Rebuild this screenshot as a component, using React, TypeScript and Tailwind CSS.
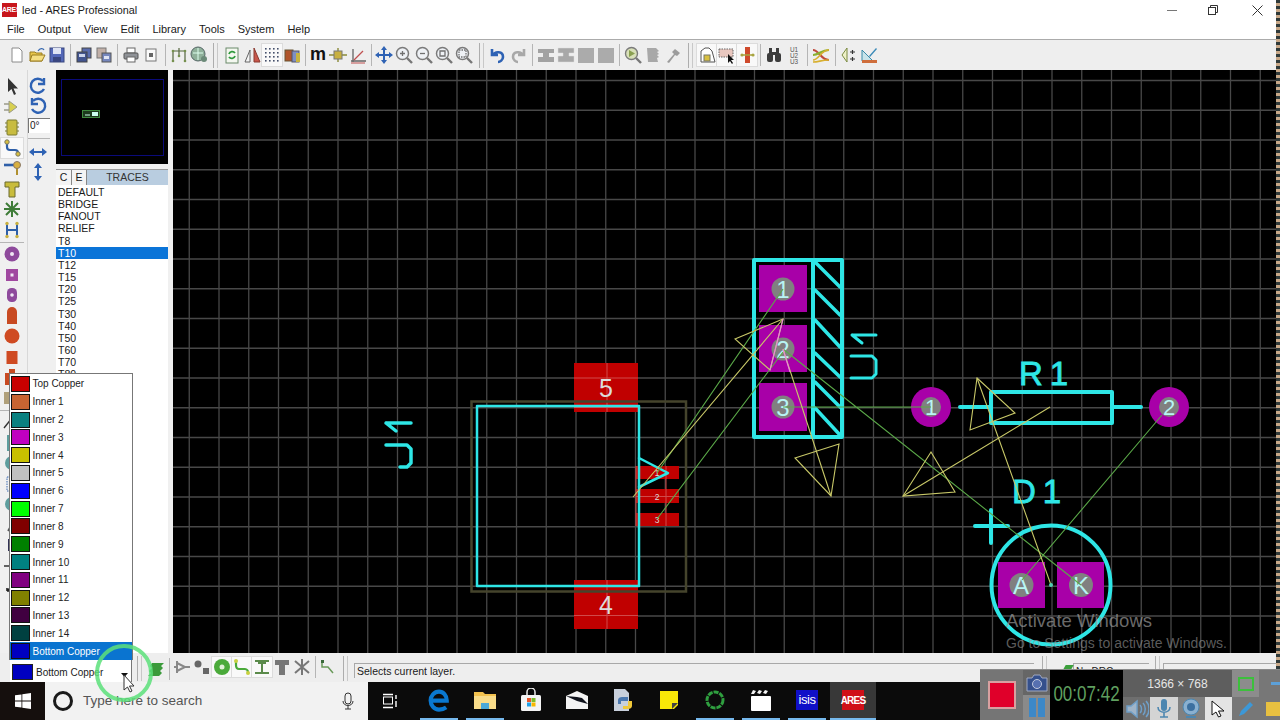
import type { ReactNode } from "react";

const Ico = ({ children, size = 20 }: { children: ReactNode; size?: number }) => (
  <svg width={size} height={size} viewBox="0 0 20 20" className="block shrink-0">
    {children}
  </svg>
);

const icons: Record<string, ReactNode> = {
  new: <path d="M5 3h7l3 3v11H5z" fill="#fff" stroke="#8a8a8a" />,
  open: (
    <>
      <path d="M3 7h5l1 1h6v8H3z" fill="#e8c64a" stroke="#9a7d20" />
      <path d="M5 10h13l-3 6H3z" fill="#f5de82" stroke="#9a7d20" />
      <path d="M11 6c2-3 5-3 6-1" fill="none" stroke="#3a6ab0" strokeWidth="1.3" />
    </>
  ),
  save: (
    <>
      <rect x="3" y="3" width="14" height="14" fill="#5468b8" stroke="#39467f" />
      <rect x="6" y="3" width="8" height="6" fill="#dfe4f4" />
      <rect x="6" y="12" width="8" height="5" fill="#39467f" />
    </>
  ),
  copy1: (
    <>
      <rect x="8" y="3" width="9" height="10" fill="#5a6cae" stroke="#444" />
      <rect x="3" y="7" width="10" height="10" fill="#42548f" stroke="#444" />
      <rect x="5" y="9" width="6" height="3" fill="#cbd3ea" />
    </>
  ),
  copy2: (
    <>
      <rect x="3" y="3" width="9" height="10" fill="#c2b0a8" stroke="#777" />
      <rect x="8" y="8" width="9" height="9" fill="#7687bd" stroke="#555" />
      <path d="M10 11h5v3h-5z" fill="#dfe4f4" />
    </>
  ),
  print: (
    <>
      <rect x="6" y="3" width="8" height="5" fill="#fff" stroke="#666" />
      <rect x="3" y="8" width="14" height="6" rx="1" fill="#8f9297" stroke="#555" />
      <rect x="6" y="12" width="8" height="5" fill="#fff" stroke="#666" />
    </>
  ),
  preview: (
    <>
      <rect x="5" y="4" width="10" height="12" fill="#fafafa" stroke="#777" />
      <rect x="8" y="8" width="4" height="4" fill="#666" />
    </>
  ),
  nets: (
    <>
      <path d="M4 16V6h12v10M10 3v8" fill="none" stroke="#55663f" strokeWidth="1.2" />
      <g fill="#76904e">
        <circle cx="4" cy="6" r="1.3" />
        <circle cx="16" cy="6" r="1.3" />
        <circle cx="10" cy="11" r="1.3" />
        <circle cx="4" cy="16" r="1.3" />
        <circle cx="16" cy="16" r="1.3" />
      </g>
    </>
  ),
  chk: (
    <>
      <circle cx="9" cy="9" r="7" fill="#8fb09a" stroke="#566" />
      <path d="M4 8h10M9 3v12" stroke="#dfe" />
      <circle cx="15" cy="14" r="3" fill="#6b8a78" />
    </>
  ),
  refresh: (
    <>
      <rect x="4" y="3" width="12" height="15" fill="#f4f8f0" stroke="#6b8a6b" />
      <path d="M7 9a3.4 3.4 0 0 1 6-1M13 11a3.4 3.4 0 0 1-6 1" fill="none" stroke="#2f9a3c" strokeWidth="1.8" />
    </>
  ),
  mirror: (
    <>
      <path d="M8 5v12H3z" fill="#f4f4f4" stroke="#666" />
      <path d="M12 3v14h6z" fill="#c8564a" stroke="#8a3a30" />
    </>
  ),
  grid: (
    <g fill="#45506b">
      {[4, 8, 12, 16].flatMap((x) =>
        [4, 8, 12, 16].map((y) => <rect key={`${x}-${y}`} x={x - 1} y={y - 1} width="1.6" height="1.6" />)
      )}
    </g>
  ),
  layers: (
    <>
      <rect x="3" y="5" width="8" height="11" fill="#b0542a" stroke="#653" />
      <rect x="10" y="6" width="7" height="11" fill="#7f8ec2" stroke="#556" />
      <rect x="14" y="8" width="4" height="9" fill="#c8b440" />
    </>
  ),
  m: (
    <text x="10" y="15" textAnchor="middle" fontSize="18" fontWeight="700" fontFamily="Liberation Sans" fill="#111">
      m
    </text>
  ),
  origin: (
    <>
      <path d="M1 10h18M10 3v14" stroke="#8a8a3a" strokeWidth="1.4" />
      <rect x="6" y="6" width="8" height="8" fill="#c8b040" stroke="#777" />
    </>
  ),
  axis: (
    <>
      <path d="M3 16h15M5 17V4" stroke="#666" strokeWidth="1.3" />
      <path d="M6 15L15 6" stroke="#c05050" strokeWidth="1.2" />
      <path d="M3 18h14" stroke="#c05050" />
    </>
  ),
  move: <path d="M10 1l3 4h-2v4h4V7l4 3-4 3v-2h-4v4h2l-3 4-3-4h2v-4H5v2l-4-3 4-3v2h4V5H7z" fill="#2e62b4" />,
  zin: <Zoom mark="M6 8.5h5M8.5 6v5" />,
  zout: <Zoom mark="M6 8.5h5" />,
  zall: <Zoom mark="M6 6h5v5H6z" />,
  zarea: <Zoom mark="M5 5h7v7H5z" dashed />,
  undo: <path d="M4 4v6h6M5 10c2-4 10-4 10 2 0 3-3 5-5 5" fill="none" stroke="#2e62b4" strokeWidth="2.6" />,
  redo: <path d="M16 4v6h-6M15 10c-2-4-10-4-10 2 0 3 3 5 5 5" fill="none" stroke="#a8a8a8" strokeWidth="2.6" />,
  a1: <path d="M2 4h16v4h-5v4h5v5H2v-5h5V8H2z" fill="#a2a2a2" />,
  a2: <path d="M2 3h16v5h-5v3h5v6H2v-6h5V8H2z" fill="#a8a8a8" stroke="#ddd" strokeWidth=".5" />,
  a3: <rect x="2" y="3" width="16" height="15" fill="#ababab" />,
  zcomp: (
    <>
      <circle cx="8.5" cy="8.5" r="6" fill="#d8e0b8" stroke="#7b7b7b" strokeWidth="1.4" />
      <path d="M6 5v7l6-3.5z" fill="#8aa050" />
      <path d="M13 13l5 5" stroke="#777" strokeWidth="2.4" />
    </>
  ),
  stack: <path d="M4 3h9l3 3-2 1 2 2-2 1 2 2-2 1 1 4H5z" fill="#a8a8a8" />,
  hammer: <path d="M4 17l7-8-2-2 3-3 5 4-3 3-2-1-6 8z" fill="#9c9c9c" />,
  lock: (
    <>
      <path d="M4 17V6l4-3h4l3 3 3 11z" fill="#fff" stroke="#555" />
      <rect x="7" y="10" width="6" height="6" fill="#d8c040" stroke="#776" />
    </>
  ),
  sel: (
    <>
      <rect x="2" y="4" width="14" height="8" fill="#e9c8c0" stroke="#666" strokeDasharray="1.5 1" />
      <path d="M11 9v9l2-2 2 3 1-1-2-3h3z" fill="#111" />
    </>
  ),
  dim: (
    <>
      <rect x="8" y="2" width="5" height="16" fill="#cf4a2c" />
      <path d="M5 10h11" stroke="#a8a440" strokeWidth="1.5" />
      <circle cx="5" cy="10" r="1.6" fill="#a8a440" />
      <circle cx="16" cy="10" r="1.6" fill="#a8a440" />
    </>
  ),
  find: (
    <g fill="#3c3c3c">
      <rect x="3" y="8" width="6" height="9" rx="2" />
      <rect x="11" y="8" width="6" height="9" rx="2" />
      <rect x="5" y="3" width="3" height="6" />
      <rect x="12" y="3" width="3" height="6" />
      <rect x="8" y="7" width="4" height="3" />
    </g>
  ),
  u123: (
    <g fontFamily="Liberation Sans" fontSize="6.4" fill="#555" textAnchor="middle">
      <text x="10" y="6.5">U1</text>
      <text x="10" y="12.5">U2</text>
      <text x="10" y="18.5">U3</text>
    </g>
  ),
  swap: (
    <>
      <path d="M2 5c6 0 8 10 16 10" fill="none" stroke="#c04a3c" strokeWidth="2.2" />
      <path d="M2 10c6 0 8-5 16-5" fill="none" stroke="#8ab030" strokeWidth="2.2" />
      <path d="M2 15c6 0 8-10 16-10M2 17c6 0 8-2 16-2" fill="none" stroke="#d8b030" strokeWidth="1.6" />
    </>
  ),
  flip: (
    <>
      <path d="M8 3l-5 7 5 7z" fill="#eef0c8" stroke="#7a8a40" />
      <path d="M11 7h5M13.5 5v4M11 14h5M13.5 12v4" stroke="#333" strokeWidth="1.2" />
    </>
  ),
  ruler: (
    <>
      <path d="M3 16V5l11 11z" fill="#c8e4ea" stroke="#3a8aa8" />
      <rect x="3" y="15" width="15" height="3" fill="#cf6e3c" />
      <path d="M10 11l7-8 1 1-7 8z" fill="#3a8ab8" />
    </>
  ),
};

function Zoom({ mark, dashed }: { mark: string; dashed?: boolean }) {
  return (
    <>
      <circle cx="8.5" cy="8.5" r="6" fill="#eef1f5" stroke="#7b7b7b" strokeWidth="1.5" />
      <path d={mark} fill="none" stroke="#707070" strokeWidth="1.3" strokeDasharray={dashed ? "1.5 1" : undefined} />
      <path d="M13 13l5 5" stroke="#777" strokeWidth="2.4" />
    </>
  );
}

const Tool = ({ name, active }: { name: string; active?: boolean }) => (
  <div className={`w-5 h-[22px] flex items-center justify-center shrink-0 ${active ? "bg-[#f9f9f9] outline outline-[#dcdcdc]" : ""}`}>
    <Ico>{icons[name]}</Ico>
  </div>
);

const Sep = ({ w = "w-[5px]" }: { w?: string }) => (
  <div className={`${w} h-[22px] flex justify-center shrink-0`}>
    <div className="w-px h-full bg-[#b5b5b5]" />
  </div>
);

const Grip = ({ w = "w-[9px]" }: { w?: string }) => (
  <div className={`${w} h-[25px] flex justify-center gap-[3px] shrink-0`}>
    <div className="w-px h-full bg-[#adadad]" />
    <div className="w-px h-full bg-[#c8c8c8]" />
  </div>
);

const Group = ({ items }: { items: string[] }) => (
  <>
    {items.map((n) => (
      <Tool key={n} name={n} active={n === "grid" || n === "lock" || n === "sel" || n === "dim"} />
    ))}
  </>
);

const menus = ["File", "Output", "View", "Edit", "Library", "Tools", "System", "Help"];

const sideA: ReactNode[] = [
  <path d="M6 2v14l3.5-3 2.5 6 2-1-2.5-5.500H16z" fill="#333" />,
  <>
    <path d="M7 4v12l8-6z" fill="#d8d050" stroke="#998" />
    <path d="M2 7h5M2 13h5" stroke="#998" strokeWidth="1.4" />
  </>,
  <>
    <rect x="5" y="3" width="10" height="15" rx="1" fill="#c8bc40" stroke="#7a7a30" />
    <path d="M3 6h2M3 10h2M3 14h2M15 6h2M15 10h2M15 14h2" stroke="#7a7a30" />
  </>,
  <>
    <path d="M5 5v4c0 2 1 3 3 3h5c2 0 3 1 3 3" fill="none" stroke="#2e5fa8" strokeWidth="2.2" />
    <circle cx="5" cy="4" r="2.200" fill="#d8c040" stroke="#776" />
    <circle cx="16" cy="16" r="2.200" fill="#d8c040" stroke="#776" />
  </>,
  <>
    <path d="M2 7h12" stroke="#2e5fa8" strokeWidth="2.600" />
    <path d="M15 9v8" stroke="#b09030" strokeWidth="2" />
    <circle cx="15" cy="7" r="3.500" fill="#d8b040" stroke="#876" />
  </>,
  <path d="M3 3h14v5h-4v10H7V8H3z" fill="#c8bc3c" stroke="#6a6a30" />,
  <path d="M10 2v16M2 10h16M4 4l12 12M16 4L4 16" stroke="#3e7c38" strokeWidth="2" />,
  <>
    <path d="M5 3v14M15 3v14M5 10h10" stroke="#2e5fa8" strokeWidth="2" />
    <g fill="#c8b040">
      <circle cx="5" cy="3.500" r="1.700" />
      <circle cx="15" cy="3.500" r="1.700" />
      <circle cx="5" cy="16.500" r="1.700" />
      <circle cx="15" cy="16.500" r="1.700" />
    </g>
  </>,
  null,
  <>
    <circle cx="10" cy="10" r="7.500" fill="#8e4a9c" />
    <circle cx="10" cy="10" r="2" fill="#f0e8f4" />
  </>,
  <>
    <rect x="4" y="4" width="12" height="12" fill="#a048a0" />
    <rect x="8.500" y="8.500" width="3" height="3" fill="#f0e8f4" />
  </>,
  <>
    <rect x="5" y="3" width="10" height="14" rx="4.500" fill="#8e4a9c" />
    <circle cx="10" cy="10" r="1.800" fill="#f0e8f4" />
  </>,
  <path d="M5 18V6a5 5 0 0 1 10 0v12z" fill="#c84a22" />,
  <circle cx="10" cy="10" r="7.500" fill="#cf4a22" />,
  <rect x="4.500" y="4" width="11" height="13" fill="#cf4a22" />,
  <path d="M3 6h4V2h6v4h-1v12H3z" fill="#c84a22" />,
  <path d="M2 4h8v12H2z" fill="#b0a07a" />,
  null,
  <path d="M2 16L10 6" stroke="#333" strokeWidth="1.400" />,
  <rect x="5" y="2" width="10" height="16" fill="#5e9e9e" />,
  <circle cx="10" cy="10" r="7" fill="#5e9e9e" />,
  <rect x="5" y="3" width="10" height="14" fill="none" stroke="#3a6ab0" strokeDasharray="1.500 1" />,
  <circle cx="10" cy="10" r="7" fill="#5e9e9e" />,
  <path d="M6 16l6-11" stroke="#555" strokeWidth="1.600" />,
  <rect x="6" y="4" width="8" height="12" fill="#335" />,
  <path d="M2 10h12" stroke="#333" strokeWidth="1.500" />,
  <path d="M5 15L12 8M5 15h3M5 15v-3" stroke="#222" strokeWidth="1.600" />,
];

const traces = ["DEFAULT", "BRIDGE", "FANOUT", "RELIEF", "T8", "T10", "T12", "T15", "T20", "T25", "T30", "T40", "T50", "T60", "T70", "T80"];

const layerRows = [
  ["Top Copper", "bg-[#c80000]"],
  ["Inner 1", "bg-[#c86432]"],
  ["Inner 2", "bg-[#0a8080]"],
  ["Inner 3", "bg-[#c000c0]"],
  ["Inner 4", "bg-[#c8c000]"],
  ["Inner 5", "bg-[#c0c0c0]"],
  ["Inner 6", "bg-[#0000ff]"],
  ["Inner 7", "bg-[#00ff00]"],
  ["Inner 8", "bg-[#800000]"],
  ["Inner 9", "bg-[#008000]"],
  ["Inner 10", "bg-[#008080]"],
  ["Inner 11", "bg-[#800080]"],
  ["Inner 12", "bg-[#808000]"],
  ["Inner 13", "bg-[#400040]"],
  ["Inner 14", "bg-[#004040]"],
  ["Bottom Copper", "bg-[#0000c0]"],
];

const CY = "#2ee6e6";
const GR = "#5aa848";
const YL = "#c8c868";
const vLines = Array.from({ length: 37 }, (_, i) => 189.25 + i * 29.75);
const hLines = Array.from({ length: 19 }, (_, i) => 80.5 + i * 29.75);

function Board() {
  const pin = "#b8f4f4";
  return (
    <svg viewBox="173 70 1103 583" className="block w-full h-full bg-black">
      <g stroke="#484848" strokeWidth="1.300">
        {vLines.map((x) => <path key={x} d={`M${x} 70V653`} />)}
        {hLines.map((y) => <path key={y} d={`M173 ${y}H1276`} />)}
      </g>
      <g fill="#c00000">
        <rect x="574" y="363" width="64" height="49" />
        <rect x="574" y="580" width="64" height="49" />
        <rect x="636" y="466" width="43" height="13" />
        <rect x="636" y="489" width="43" height="14" />
        <rect x="636" y="513" width="43" height="13" />
      </g>
      <path d="M574 378H638M574 407.500H638M574 585.500H638M574 615.500H638M607 363V412M607 580V629M636 466V526M666 466V526M636 496.500H679" stroke="#d04a4a" strokeWidth="1" />
      <rect x="471.500" y="401.500" width="214.500" height="190" fill="none" stroke="#45442c" strokeWidth="2.500" />
      <g fill="#dcdcdc" fontFamily="Liberation Sans" textAnchor="middle">
        <text x="606" y="397" fontSize="25">5</text>
        <text x="606" y="614" fontSize="25">4</text>
        <text x="657" y="476" fontSize="8.500">1</text>
        <text x="657" y="500" fontSize="8.500">2</text>
        <text x="657" y="523" fontSize="8.500">3</text>
      </g>
      <g fill="none" stroke={CY} strokeLinecap="round" strokeLinejoin="round">
        <rect x="477" y="406" width="162" height="180" strokeWidth="2.500" />
        <path d="M639 458L668 473L639 487" strokeWidth="2.500" />
        <path d="M386 423H411M386 423L396 431M386 445H407L411 449V463L407 467H400" strokeWidth="3.500" />
      </g>

      <g fill="#a800a8">
        <rect x="759" y="265" width="48" height="47" />
        <rect x="759" y="325" width="48" height="47" />
        <rect x="759" y="383" width="48" height="48" />
        <circle cx="931" cy="407" r="20" />
        <circle cx="1169" cy="407" r="20" />
        <rect x="998" y="562" width="47" height="46" />
        <rect x="1057" y="562" width="47" height="46" />
      </g>
      <g fill="#808080">
        <circle cx="783" cy="289" r="11.500" />
        <circle cx="783" cy="349" r="11.500" />
        <circle cx="783" cy="407" r="11.500" />
        <circle cx="931" cy="407" r="10" />
        <circle cx="1169" cy="407" r="10" />
        <circle cx="1021.500" cy="585" r="12" />
        <circle cx="1081" cy="585" r="12" />
      </g>

      <g fill="none" stroke={CY} strokeLinecap="round" strokeLinejoin="round">
        <rect x="754" y="260" width="88" height="177" strokeWidth="4" />
        <path d="M813 260V437" strokeWidth="4" />
        <path d="M815 262L840 287M815 290L840 315M815 320L840 347M815 353L840 377M815 382L840 407M815 408L840 435" strokeWidth="3.500" />
        <path d="M852 335H876M852 335L862 343M851 356H872L876 360V374L872 378H851" strokeWidth="3" />
        <rect x="991" y="392" width="121" height="31" strokeWidth="4" />
        <path d="M960 407H990M1112 407H1141" strokeWidth="4" />
        <path d="M975 526H1008M991 510V543" strokeWidth="4" />
        <circle cx="1051" cy="585" r="59.500" strokeWidth="4" />
      </g>
      <g fill={CY} stroke={CY} strokeWidth=".8" fontFamily="Liberation Sans" fontSize="33">
        <text x="1019" y="385" letterSpacing="7">R1</text>
        <text x="1012" y="503" letterSpacing="7">D1</text>
      </g>
      <g fill={pin} fontFamily="Liberation Sans" fontSize="24" textAnchor="middle">
        <text x="783" y="298">1</text>
        <text x="783" y="358">2</text>
        <text x="783" y="416">3</text>
        <text x="931" y="415" fontSize="22">1</text>
        <text x="1169" y="415" fontSize="22">2</text>
        <text x="1021" y="594">A</text>
        <text x="1081" y="594">K</text>
      </g>

      <g fill="none" strokeWidth="1.100">
        <g stroke={GR}>
          <path d="M1162 415L1022 580M783 349L1081 585M783 407H931M783 289L657 473M783 352L657 519" />
        </g>
        <g stroke={YL}>
          <path d="M735 339L783 319L770 370Z" />
          <path d="M795 458L839 444L831 496Z" />
          <path d="M931 452L955 492L903 496Z" />
          <path d="M977 378L1015 413L970 430Z" />
          <path d="M783 319L633 497M783 349L831 496M903 496L1050 407M977 378L1051 585" />
        </g>
        <path d="M783 319L770 370M783 349L790 372" stroke="#e888d8" />
      </g>
      <circle cx="1051" cy="585" r="2" fill="#4fd0b0" />
    </svg>
  );
}

const TaskItem = ({ children, on, dark }: { children: ReactNode; on?: boolean; dark?: boolean }) => (
  <div className={`w-[46px] h-full flex flex-col items-center justify-between shrink-0 ${dark ? "bg-[#383838]" : ""}`}>
    <div className="flex-1 flex items-center justify-center">{children}</div>
    <div className={`h-[2px] ${dark ? "w-full" : "w-[38px]"} ${on ? "bg-[#76b9ed]" : ""}`} />
  </div>
);

function Taskbar() {
  return (
    <div className="h-[38px] flex bg-[#0b0b0b] shrink-0">
      <div className="w-[45px] flex items-center justify-center bg-[#150f0d]">
        <svg width="16" height="16" viewBox="0 0 16 16">
          <path d="M0 2.300l6.500-.9v6.200H0zM7.300 1.300L16 0v7.600H7.300zM0 8.400h6.500v6.200L0 13.700zM7.300 8.400H16V16l-8.700-1.200z" fill="#fff" />
        </svg>
      </div>
      <div className="w-[323px] flex items-center bg-[#f2f2f2]">
        <div className="w-[20px] h-[20px] ml-2 rounded-full border-[3px] border-[#1a1a1a]" />
        <span className="ml-[10px] text-[13.500px] text-[#555]">Type here to search</span>
        <svg width="14" height="18" viewBox="0 0 14 18" className="ml-auto mr-[13px]">
          <rect x="4" y="1" width="6" height="11" rx="3" fill="none" stroke="#333" />
          <path d="M2 9c0 6 10 6 10 0M7 14v3M4 17h6" fill="none" stroke="#333" />
        </svg>
      </div>
      <div className="w-[44px] flex items-center justify-center text-white shrink-0">
        <svg width="16" height="16" viewBox="0 0 16 16" fill="none" stroke="#fff">
          <rect x="1.500" y="4" width="9" height="7" />
          <path d="M1 1.500h10M1 14.500h10M14 2v4M14 8v6" strokeWidth="1.400" />
        </svg>
      </div>
      <div className="h-full flex ml-[4px]">
        <TaskItem on>
          <svg width="24" height="24" viewBox="0 0 20 20">
            <path d="M3.500 10.500H16.500C16.500 6 13.500 3 10 3 6 3 3 6.500 3 10.500S6 18 10 18c2.200 0 4.200-.5 6-1.800" fill="none" stroke="#0a78d0" strokeWidth="3.400" />
          </svg>
        </TaskItem>
        <TaskItem on>
          <svg width="24" height="22" viewBox="0 0 24 22">
            <path d="M1 3h9l2 2h11v15H1z" fill="#f2c14e" />
            <rect x="1" y="7" width="22" height="13" fill="#f8dc8a" />
            <rect x="8" y="14" width="8" height="6" fill="#4aa8d8" />
          </svg>
        </TaskItem>
        <TaskItem>
          <svg width="22" height="24" viewBox="0 0 22 24">
            <path d="M7 7V4a4 4 0 0 1 8 0v3" fill="none" stroke="#eee" strokeWidth="1.500" />
            <rect x="1" y="7" width="20" height="16" rx="1.500" fill="#f4f4f4" />
            <rect x="7" y="10" width="4" height="4" fill="#e8542a" />
            <rect x="11.500" y="10" width="4" height="4" fill="#7cbc2a" />
            <rect x="7" y="14.500" width="4" height="4" fill="#1ea0e8" />
            <rect x="11.500" y="14.500" width="4" height="4" fill="#f8b800" />
          </svg>
        </TaskItem>
        <TaskItem>
          <svg width="24" height="18" viewBox="0 0 24 18">
            <path d="M1 5L12 0l11 5v13H1z" fill="#f4f4f4" />
            <path d="M1 5l11 5 11 3-6-6-5-1z" fill="#10131c" />
          </svg>
        </TaskItem>
        <TaskItem>
          <svg width="22" height="24" viewBox="0 0 22 24">
            <path d="M2 1h11l4 4v18H2z" fill="#c8d0dc" />
            <path d="M10 9h6v4h-7v3H6v-4c0-2 2-3 4-3z" fill="#4a78b0" />
            <path d="M20 13v5c0 2-2 3-4 3h-5v-3h5v-5z" fill="#f0c838" />
          </svg>
        </TaskItem>
        <TaskItem>
          <svg width="20" height="20" viewBox="0 0 20 20">
            <path d="M1 1h18v14l-4 4H1z" fill="#f8e808" />
            <path d="M13 19v-6h6z" fill="#444" />
          </svg>
        </TaskItem>
        <TaskItem on>
          <svg width="22" height="22" viewBox="0 0 22 22">
            <circle cx="11" cy="11" r="8" fill="none" stroke="#2f9f3f" strokeWidth="3" strokeDasharray="5 1" />
          </svg>
        </TaskItem>
        <TaskItem on>
          <svg width="22" height="24" viewBox="0 0 22 24">
            <path d="M1 6l2-4 3 1-2 3zM7 5l2-3 3 1-2 3zM13 5l2-3 3 1-2 3z" fill="#f4f4f4" />
            <rect x="1" y="8" width="20" height="15" rx="1" fill="#fff" />
          </svg>
        </TaskItem>
        <TaskItem on>
          <div className="w-[22px] h-[20px] bg-[#1010c8] flex items-center justify-center text-white text-[13px] tracking-[-0.5px]">isis</div>
        </TaskItem>
        <TaskItem on dark>
          <div className="w-[22px] h-[20px] bg-[#d01018] flex items-center justify-center text-white text-[10px] font-bold tracking-[-0.8px]">ARES</div>
        </TaskItem>
      </div>
    </div>
  );
}

function Recorder() {
  return (
    <div className="absolute left-[980px] top-[669px] w-[300px] h-[51px] flex bg-[#6a6a6a] border-t border-[#8a8a8a]">
      <div className="w-[43px] flex items-center justify-center bg-[#757575]">
        <div className="w-[24px] h-[24px] bg-[#e0002a] outline-2 outline-[#d8a0a0]" />
      </div>
      <div className="w-[27px] flex flex-col bg-[#666]">
        <div className="flex-1 flex items-center justify-center">
          <svg width="22" height="18" viewBox="0 0 22 18">
            <path d="M1 4h5l2-3h6l2 3h5v13H1z" fill="#35508c" stroke="#a0a8c0" />
            <circle cx="11" cy="10" r="4.500" fill="#5670b0" stroke="#c0c8dc" />
          </svg>
        </div>
        <div className="flex-1 flex items-center justify-center gap-[2px] bg-[#8a8a8a]">
          <div className="w-[7px] h-[19px] bg-[#3c88c8]" />
          <div className="w-[7px] h-[19px] bg-[#3c88c8]" />
        </div>
      </div>
      <div className="w-[73px] bg-black flex items-center justify-center">
        <span className="text-[17px] text-[#5f9f5f] scale-y-125">00:07:42</span>
      </div>
      <div className="w-[109px] flex flex-col">
        <div className="h-[27px] flex items-center justify-center text-[12px] text-[#e6e6e6] bg-[#5e5e5e]">1366 × 768</div>
        <div className="flex-1 flex">
          <div className="flex-1 flex items-center justify-center bg-[#6e6e6e]">
            <svg width="24" height="20" viewBox="0 0 24 20" fill="none" stroke="#6f9fc8" strokeWidth="1.500">
              <path d="M2 7h4l6-5v16l-6-5H2z" fill="#a0b4c8" />
              <path d="M15 6c2 2 2 6 0 8M18 4c3 3 3 9 0 12M21 2c4 4 4 12 0 16" />
            </svg>
          </div>
          <div className="flex-1 flex items-center justify-center bg-[#d4d4d4]">
            <svg width="16" height="21" viewBox="0 0 16 21">
              <rect x="5" y="1" width="6" height="12" rx="3" fill="#4c86b0" />
              <path d="M2 9c0 7 12 7 12 0M8 15v4M4 19h8" fill="none" stroke="#4c86b0" strokeWidth="1.600" />
            </svg>
          </div>
          <div className="flex-1 flex items-center justify-center bg-[#808080]">
            <svg width="20" height="21" viewBox="0 0 20 21">
              <circle cx="10" cy="9" r="8" fill="#8ab0d0" stroke="#4c86b0" />
              <circle cx="10" cy="9" r="4" fill="#3c70a0" />
              <path d="M5 19h10" stroke="#4c86b0" strokeWidth="2" />
            </svg>
          </div>
          <div className="flex-1 flex items-center justify-center bg-[#e4e4e4]">
            <svg width="14" height="18" viewBox="0 0 14 18">
              <path d="M1 1v14l4-3 2.500 5 2.500-1-2.500-5H13z" fill="#fff" stroke="#111" />
            </svg>
          </div>
        </div>
      </div>
      <div className="w-[27px] flex flex-col">
        <div className="h-[27px] flex items-center justify-center bg-[#8c8c8c]">
          <div className="w-[16px] h-[14px] border-2 border-[#3cc03c]" />
        </div>
        <div className="flex-1 flex items-center justify-center bg-[#777]">
          <svg width="18" height="18" viewBox="0 0 18 18">
            <path d="M2 16l2-5L13 2l3 3-9 9z" fill="#3c98d8" />
          </svg>
        </div>
      </div>
      <div className="flex-1 flex flex-col">
        <div className="h-[27px] flex items-center justify-end bg-[#777]">
          <div className="w-[9px] h-[3px] bg-[#5ca0d8]" />
        </div>
        <div className="flex-1 flex items-center justify-end bg-[#777]">
          <div className="w-[14px] h-[14px] bg-[#e8c040]" />
        </div>
      </div>
    </div>
  );
}

export default function App() {
  return (
    <div className="relative w-[1280px] h-[720px] overflow-hidden flex flex-col bg-[#f0f0f0] font-['Liberation_Sans',sans-serif] text-[#1a1a1a]">
      <div className="flex h-[682px] shrink-0">
        <div className="flex-1 min-w-0 flex flex-col">
          {/* title */}
          <div className="h-5 bg-white flex items-center shrink-0">
            <div className="ml-[2px] w-[15px] h-[14px] bg-[#c8161c] text-white text-[7px] font-bold leading-[14px] text-center tracking-[-0.3px]">ARES</div>
            <span className="ml-[5px] text-[10.800px]">led - ARES Professional</span>
            <div className="ml-auto flex items-center">
              <div className="w-[10px] h-px bg-[#777] mr-[31px]" />
              <svg width="10" height="10" viewBox="0 0 10 10" className="mr-[34px]" fill="none" stroke="#333">
                <rect x=".500" y="2.500" width="7" height="7" />
                <path d="M2.500 2.500V.500h7v7h-2" />
              </svg>
              <svg width="11" height="11" viewBox="0 0 11 11" className="mr-[13px]" stroke="#333">
                <path d="M.500.500l10 10M10.500.500l-10 10" />
              </svg>
            </div>
          </div>
          {/* menu */}
          <div className="h-[20px] bg-white flex items-center pl-[7px] gap-[13px] text-[11px] border-b border-[#ababab] shrink-0">
            {menus.map((m) => <span key={m}>{m}</span>)}
          </div>
          {/* toolbar */}
          <div className="h-[30px] flex items-center pl-[4px] bg-[#eeeeee] shrink-0">
            <Grip w="w-[3px]" />
            <Group items={["new", "open", "save"]} />
            <Sep w="w-[7px]" />
            <Group items={["copy1", "copy2"]} />
            <Sep w="w-[7px]" />
            <Group items={["print", "preview"]} />
            <Sep w="w-[8px]" />
            <Group items={["nets", "chk"]} />
            <Grip w="w-[13px]" />
            <Group items={["refresh", "mirror", "grid", "layers"]} />
            <Sep w="w-[6px]" />
            <Group items={["m", "origin", "axis"]} />
            <Sep w="w-[6px]" />
            <Group items={["move", "zin", "zout", "zall", "zarea"]} />
            <Grip w="w-[14px]" />
            <Group items={["undo", "redo"]} />
            <Sep w="w-[8px]" />
            <Group items={["a1", "a2", "a3"]} />
            <Tool name="a3" />
            <Sep w="w-[7px]" />
            <Group items={["zcomp", "stack", "hammer"]} />
            <Grip w="w-[14px]" />
            <Group items={["lock", "sel", "dim"]} />
            <Sep w="w-[7px]" />
            <Group items={["find", "u123"]} />
            <Sep w="w-[7px]" />
            <Group items={["swap"]} />
            <Sep w="w-[8px]" />
            <Group items={["flip", "ruler"]} />
          </div>
          {/* main */}
          <div className="flex-1 min-h-0 flex">
            <div className="w-[28px] pt-[6px] flex flex-col items-start shrink-0 overflow-hidden border-r border-[#d8d8d8]">
              {sideA.map((d, i) =>
                d === null ? (
                  <div key={i} className="h-[4px] w-[24px] flex items-center shrink-0"><div className="w-full h-px bg-[#b5b5b5]" /></div>
                ) : (
                  <div key={i} className={`h-[20.500px] w-[22px] ml-px -mr-px flex items-center justify-center shrink-0 ${i === 3 ? "bg-[#f9f9f9] outline outline-[#dcdcdc]" : ""}`}>
                    <Ico>{d}</Ico>
                  </div>
                )
              )}
            </div>
            <div className="w-[28px] pt-[6px] flex flex-col items-start shrink-0">
              <div className="h-5 w-[20px] flex justify-center"><Ico><path d="M15 5a7 7 0 1 0 1 8M16 2v6h-6" fill="none" stroke="#2e62b4" strokeWidth="2.400" /></Ico></div>
              <div className="h-5 w-[20px] flex justify-center"><Ico><path d="M5 5a7 7 0 1 1-1 8M4 2v6h6" fill="none" stroke="#2e62b4" strokeWidth="2.400" /></Ico></div>
              <div className="mt-[2px] w-[22px] h-[15px] bg-white border-l border-t border-[#777] text-[10px] leading-[14px] pl-px">0°</div>
              <div className="mt-[5px] mb-[3px] h-px w-[22px] bg-[#b5b5b5]" />
              <div className="h-[20px] w-[20px] flex justify-center"><Ico><path d="M1 10l5-4v3h8V6l5 4-5 4v-3H6v3z" fill="#2e62b4" /></Ico></div>
              <div className="h-[22px] w-[20px] flex justify-center"><Ico><path d="M10 1l4 5h-3v8h3l-4 5-4-5h3V6H6z" fill="#2e62b4" /></Ico></div>
            </div>
            <div className="w-[112px] flex flex-col shrink-0">
              <svg viewBox="0 0 112 94" className="block w-[112px] h-[94px] bg-black shrink-0">
                <rect x="5.500" y="9.500" width="102" height="76" fill="none" stroke="#0a0a7a" />
                <rect x="26.500" y="40.500" width="17" height="7" fill="#1c3a1c" stroke="#3e8a3e" />
                <path d="M29 45h5" stroke="#cfe" />
                <rect x="36" y="42" width="6" height="4" fill="#cfe" />
              </svg>
              <div className="h-[5px] shrink-0" />
              <div className="h-[16px] flex text-[10.500px] shrink-0 border-t border-[#9a9a9a]">
                <div className="w-[16px] bg-[#f4f4f4] border-r border-[#888] text-center leading-[15px]">C</div>
                <div className="w-[15px] bg-[#f4f4f4] border-r border-[#888] text-center leading-[15px]">E</div>
                <div className="flex-1 bg-[#b9cde0] text-center leading-[15px] text-[#333]">TRACES</div>
              </div>
              <div className="flex-1 min-h-0 overflow-hidden bg-white pt-px">
                {traces.map((t) => (
                  <div key={t} className={`h-[12.170px] pl-[2px] text-[10.500px] leading-[12px] ${t === "T10" ? "bg-[#0a74d8] text-white" : ""}`}>{t}</div>
                ))}
              </div>
            </div>
            <div className="w-[5px] shrink-0" />
            <div className="flex-1 min-w-0">
              <Board />
            </div>
          </div>
          {/* status */}
          <div className="h-[29px] flex items-start bg-[#eeeeee] shrink-0">
            <div className="ml-[10px] mt-[7px] w-[122px] h-[22px] pb-[2px] bg-white border-r border-[#777] flex items-end shrink-0">
              <div className="ml-[2px] w-[21px] h-[16px] bg-[#0000c0] border border-[#222]" />
              <span className="ml-[3px] text-[10px] leading-[15px]">Bottom Copper</span>
            </div>
            <div className="mt-[3px] flex items-center">
              <Grip w="w-[14px]" />
              <Ico><path d="M6 4h12l-3 3 2 2-3 3 2 2-3 3H2l3-3-2-2 3-3-2-2z" fill="#3a9a3a" /></Ico>
              <Sep w="w-[6px]" />
            </div>
            <div className="mt-[3px] flex items-center">
              <Ico><path d="M5 4v12M5 6l8 4-8 4M2 10h3M13 10h5" fill="none" stroke="#888" strokeWidth="2" /></Ico>
              <Ico><><circle cx="6" cy="7" r="3.500" fill="#666" /><rect x="11" y="11" width="6" height="6" fill="#666" /></></Ico>
              <div className="bg-[#f9f9f9] outline outline-[#dcdcdc]"><Ico><><circle cx="10" cy="10" r="8" fill="#4aaa3a" /><circle cx="10" cy="10" r="2.500" fill="#e0f0d8" /></></Ico></div>
              <div className="bg-[#f9f9f9] outline outline-[#dcdcdc]"><Ico><><path d="M4 5v3c0 2 1 4 3 4h6c2 0 3 2 3 3" fill="none" stroke="#4aaa3a" strokeWidth="2.200" /><circle cx="4" cy="4" r="2" fill="#c8d040" /><circle cx="16" cy="16" r="2" fill="#c8d040" /></></Ico></div>
              <div className="bg-[#f9f9f9] outline outline-[#dcdcdc]"><Ico><path d="M3 4h14M3 16h14M10 5v10M6 6h8" fill="none" stroke="#5a8a4a" strokeWidth="2" /></Ico></div>
              <Ico><path d="M3 3h14v5h-4v10H7V8H3z" fill="#777" /></Ico>
              <Ico><path d="M10 2v16M3 4l14 12M17 4L3 16" stroke="#777" strokeWidth="2" /></Ico>
              <Sep w="w-[6px]" />
              <Ico><><path d="M4 4v6h6l5 6" fill="none" stroke="#6a9a5a" strokeWidth="1.500" /><rect x="3" y="3" width="3" height="3" fill="#3a6a3a" /></></Ico>
            </div>
            <div className="mt-[3px]"><Grip w="w-[15px]" /></div>
            <div className="mt-[10px] flex-1 h-[15px] ml-[1px] border-t border-l border-[#a8a8a8] text-[10.500px] leading-[14px] pl-[2px]">Selects current layer.</div>
            <div className="w-[6px]" />
            <div className="mt-[3px]"><Grip w="w-[8px]" /></div>
            <div className="mt-[12px] ml-[16px] w-[8px] h-[6px] bg-[#3ca03c] -skew-x-30" />
            <div className="mt-[10px] ml-[1px] w-[76px] h-[15px] border-t border-l border-[#a8a8a8] text-[10px] pl-[2px]">No DRC</div>
            <div className="mt-[3px] ml-[4px]"><Grip w="w-[8px]" /></div>
            <div className="mt-[10px] ml-[2px] w-[113px] h-[15px] border-t border-l border-[#a8a8a8]" />
          </div>
        </div>
        <div className="w-[4px] shrink-0 bg-[repeating-linear-gradient(180deg,#2f3a3a_0px,#2f3a3a_3px,#c8a888_3px,#c8a888_6px)]" />
      </div>
      <Taskbar />

      {/* layer dropdown */}
      <div className="absolute left-[9px] top-[373px] w-[124px] h-[287px] bg-white border border-[#777] pt-px">
        {layerRows.map(([name, color]) => (
          <div key={name} className={`h-[17.820px] flex items-center ${name === "Bottom Copper" ? "bg-[#0a74d0] text-white" : "text-[#222]"}`}>
            <div className={`ml-px w-[19px] h-[16px] border border-[#111] ${color}`} />
            <span className="ml-[2.500px] text-[10px] whitespace-nowrap">{name}</span>
          </div>
        ))}
      </div>
      <svg width="14" height="14" viewBox="0 0 14 14" className="absolute left-[118px] top-[670px]">
        <path d="M3 3h7l-3.500 4z" fill="#111" />
      </svg>

      {/* watermark */}
      <div className="absolute left-[1006px] top-[610px] text-[18.500px] leading-[22px] text-[#9a9a9a]/70 whitespace-nowrap">Activate Windows</div>
      <div className="absolute left-[1006px] top-[635px] text-[14px] leading-[16px] text-[#9a9a9a]/60 whitespace-nowrap">Go to Settings to activate Windows.</div>

      <Recorder />

      {/* click ring and pointer */}
      <svg width="64" height="66" viewBox="0 0 64 66" className="absolute left-[92px] top-[640px]">
        <circle cx="32" cy="33" r="27" fill="none" stroke="#5ce07a" strokeWidth="4" opacity=".85" />
        <path d="M32 35v15l3.500-3 2.500 5 2-1-2.500-5H42z" fill="#fff" stroke="#333" />
      </svg>
    </div>
  );
}
